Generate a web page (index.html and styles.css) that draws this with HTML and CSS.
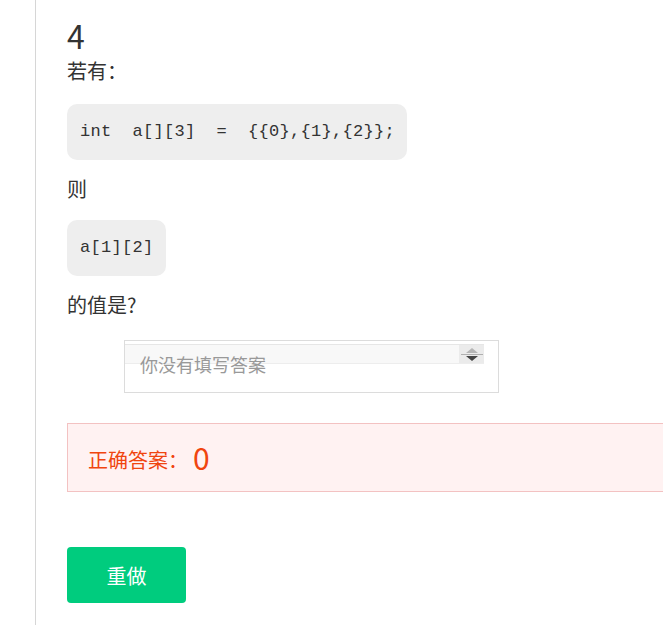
FILE: index.html
```html
<!DOCTYPE html>
<html lang="zh-CN">
<head>
<meta charset="utf-8">
<title>题目 4</title>
<link rel="stylesheet" href="styles.css">
</head>
<body>
<div class="page">
  <div class="question">
    <div class="q-num">4</div>
    <p class="q-text">若有：</p>
    <pre class="code">int  a[][3]  =  {{0},{1},{2}};</pre>
    <p class="q-text">则</p>
    <pre class="code">a[1][2]</pre>
    <p class="q-text">的值是?</p>
    <div class="answer-input">
      <div class="select-bar"><span class="spinner"><span class="up"></span><span class="mid"></span><span class="down"></span></span></div>
      <div class="placeholder">你没有填写答案</div>
    </div>
    <div class="correct">
      <span class="label">正确答案：</span><span class="value">0</span>
    </div>
    <button class="redo" type="button">重做</button>
  </div>
</div>
</body>
</html>
```

FILE: styles.css
```css
html, body {
  margin: 0;
  padding: 0;
  background: #fff;
  overflow: hidden;
}
body {
  font-family: "Noto Sans CJK SC", "Noto Sans", sans-serif;
  color: #333;
}
.page {
  margin-left: 35px;
  border-left: 1px solid #d6d6d6;
  min-height: 625px;
  padding-left: 31px;
}
.question {
  display: flex;
  flex-direction: column;
  align-items: flex-start;
  padding-top: 15px;
}
.q-num {
  font-size: 32px;
  line-height: 40px;
  color: #333;
}
.q-text {
  margin: 0;
  font-size: 20px;
  line-height: 26px;
  color: #333;
}
.q-num + .q-text {
  margin-top: 3px;
}
.code {
  margin: 20px 0 16px;
  background: #eeeeee;
  border-radius: 10px;
  padding: 16px 12px 17px 13px;
  font-family: "Liberation Mono", "DejaVu Sans Mono", monospace;
  font-size: 17px;
  letter-spacing: 0.3px;
  line-height: 23px;
  color: #333;
}
.q-text + .code + .q-text + .code {
  margin-top: 18px;
}
.answer-input {
  position: relative;
  margin: 22px 0 0 57px;
  width: 373px;
  height: 51px;
  border: 1px solid #dcdcdc;
}
.select-bar {
  position: absolute;
  left: 0;
  top: 3px;
  width: 359px;
  height: 18px;
  background: #f8f8f8;
  border-top: 1px solid #e6e6e6;
  border-bottom: 1px solid #ededed;
  display: flex;
  justify-content: flex-end;
}
.spinner {
  width: 25px;
  height: 18px;
  background: #ebebeb;
  display: flex;
  flex-direction: column;
  align-items: center;
  justify-content: center;
}
.spinner .up {
  width: 0;
  height: 0;
  border-left: 6px solid transparent;
  border-right: 6px solid transparent;
  border-bottom: 5px solid #b5b5b5;
}
.spinner .mid {
  width: 22px;
  height: 1px;
  margin: 1px 0;
  background: #b0b0b0;
}
.spinner .down {
  width: 0;
  height: 0;
  border-left: 6px solid transparent;
  border-right: 6px solid transparent;
  border-top: 5px solid #444;
}
.placeholder {
  position: relative;
  padding: 11px 0 0 15px;
  font-size: 18px;
  line-height: 24px;
  color: #999;
}
.correct {
  margin-top: 30px;
  width: 640px;
  height: 69px;
  box-sizing: border-box;
  border: 1px solid #f3c2c2;
  background: #fff2f2;
  display: flex;
  align-items: center;
  padding-left: 20px;
  padding-top: 4px;
  color: #f0450f;
}
.correct .label {
  font-size: 20px;
}
.correct .value {
  font-size: 30px;
  line-height: 30px;
  margin-left: 5px;
  margin-top: -6px;
}
.redo {
  margin-top: 55px;
  width: 119px;
  height: 56px;
  border: none;
  border-radius: 4px;
  background: #00cc7e;
  color: #fff;
  font-family: "Noto Sans CJK SC", sans-serif;
  font-size: 20px;
  cursor: pointer;
}
```
